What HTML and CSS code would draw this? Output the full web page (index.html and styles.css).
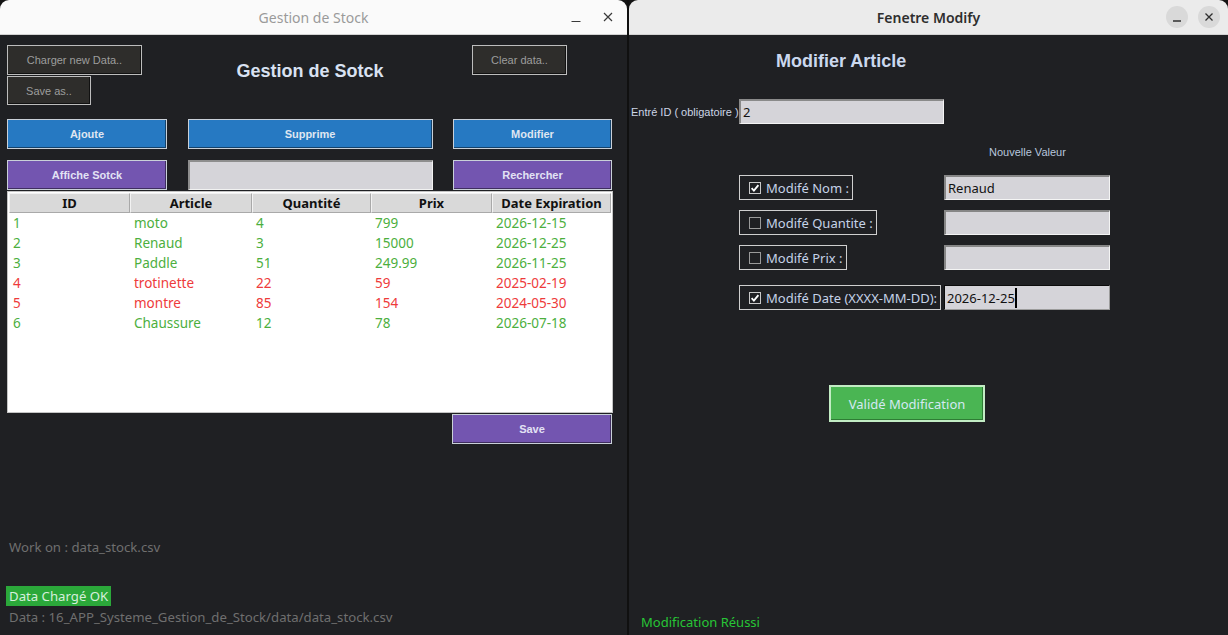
FILE: index.html
```html
<!DOCTYPE html>
<html lang="fr">
<head>
<meta charset="utf-8">
<title>Gestion de Stock</title>
<link rel="stylesheet" href="styles.css">
</head>
<body>
<div class="desktop">
  <section class="window win-main">
    <header class="titlebar inactive">
      <span class="title">Gestion de Stock</span>
      <div class="controls">
        <span class="ctl"><svg width="12" height="12" viewBox="0 0 12 12"><line x1="1.5" y1="10.5" x2="10.5" y2="10.5" stroke="#3a3a3a" stroke-width="1.2"/></svg></span>
        <span class="ctl"><svg width="12" height="12" viewBox="0 0 12 12"><path d="M2 2 L10 10 M10 2 L2 10" stroke="#3a3a3a" stroke-width="1.2"/></svg></span>
      </div>
    </header>
    <div class="body main-body">
      <div class="topbar">
        <div class="file-btns">
          <button class="tk-btn dark w-charger">Charger new Data..</button>
          <button class="tk-btn dark w-saveas">Save as..</button>
        </div>
        <h1 class="app-title">Gestion de Sotck</h1>
        <button class="tk-btn dark w-clear">Clear data..</button>
      </div>
      <div class="action-grid">
        <button class="tk-btn blue">Ajoute</button>
        <button class="tk-btn blue">Supprime</button>
        <button class="tk-btn blue">Modifier</button>
        <button class="tk-btn purple">Affiche Sotck</button>
        <div class="tk-entry search"></div>
        <button class="tk-btn purple">Rechercher</button>
      </div>
      <div class="table">
        <div class="thead">
          <div class="th">ID</div>
          <div class="th">Article</div>
          <div class="th">Quantité</div>
          <div class="th">Prix</div>
          <div class="th">Date Expiration</div>
        </div>
        <div class="tr ok"><div>1</div><div>moto</div><div>4</div><div>799</div><div>2026-12-15</div></div>
        <div class="tr ok"><div>2</div><div>Renaud</div><div>3</div><div>15000</div><div>2026-12-25</div></div>
        <div class="tr ok"><div>3</div><div>Paddle</div><div>51</div><div>249.99</div><div>2026-11-25</div></div>
        <div class="tr bad"><div>4</div><div>trotinette</div><div>22</div><div>59</div><div>2025-02-19</div></div>
        <div class="tr bad"><div>5</div><div>montre</div><div>85</div><div>154</div><div>2024-05-30</div></div>
        <div class="tr ok"><div>6</div><div>Chaussure</div><div>12</div><div>78</div><div>2026-07-18</div></div>
      </div>
      <div class="save-row">
        <button class="tk-btn purple save">Save</button>
      </div>
      <div class="footer">
        <p class="work-on">Work on : data_stock.csv</p>
        <p class="status-ok">Data Chargé OK</p>
        <p class="data-path">Data : 16_APP_Systeme_Gestion_de_Stock/data/data_stock.csv</p>
      </div>
    </div>
  </section>
  <div class="divider"></div>
  <section class="window win-modify">
    <header class="titlebar active">
      <span class="title">Fenetre Modify</span>
      <div class="controls">
        <span class="ctl round"><svg width="12" height="12" viewBox="0 0 12 12"><line x1="2" y1="10" x2="10" y2="10" stroke="#2e2e2e" stroke-width="1.3"/></svg></span>
        <span class="ctl round"><svg width="12" height="12" viewBox="0 0 12 12"><path d="M2.5 2.5 L9.5 9.5 M9.5 2.5 L2.5 9.5" stroke="#2e2e2e" stroke-width="1.3"/></svg></span>
      </div>
    </header>
    <div class="body modify-body">
      <h2 class="modify-title">Modifier Article</h2>
      <div class="id-row">
        <label class="id-label">Entré ID ( obligatoire )</label>
        <div class="tk-entry id-entry">2</div>
      </div>
      <p class="new-value">Nouvelle Valeur</p>
      <div class="check-grid">
        <div class="check-frame">
          <svg class="cb" width="12" height="12" viewBox="0 0 12 12"><rect x="0.5" y="0.5" width="11" height="11" fill="#1f2023" stroke="#c9c9c9"/><path d="M2.6 6.2 L4.9 8.6 L9.4 3.2" fill="none" stroke="#ffffff" stroke-width="1.8"/></svg>
          <span>Modifé Nom :</span>
        </div>
        <div class="tk-entry val-entry">Renaud</div>
        <div class="check-frame">
          <svg class="cb" width="12" height="12" viewBox="0 0 12 12"><rect x="0.5" y="0.5" width="11" height="11" fill="#1f2023" stroke="#9a9a9a"/></svg>
          <span>Modifé Quantite :</span>
        </div>
        <div class="tk-entry val-entry"></div>
        <div class="check-frame">
          <svg class="cb" width="12" height="12" viewBox="0 0 12 12"><rect x="0.5" y="0.5" width="11" height="11" fill="#1f2023" stroke="#9a9a9a"/></svg>
          <span>Modifé Prix :</span>
        </div>
        <div class="tk-entry val-entry"></div>
        <div class="check-frame date-frame">
          <svg class="cb" width="12" height="12" viewBox="0 0 12 12"><rect x="0.5" y="0.5" width="11" height="11" fill="#1f2023" stroke="#c9c9c9"/><path d="M2.6 6.2 L4.9 8.6 L9.4 3.2" fill="none" stroke="#ffffff" stroke-width="1.8"/></svg>
          <span>Modifé Date (XXXX-MM-DD):</span>
        </div>
        <div class="tk-entry val-entry focused date-entry">2026-12-25<span class="caret"></span></div>
      </div>
      <div class="validate-row">
        <button class="validate-btn">Validé Modification</button>
      </div>
      <p class="success">Modification Réussi</p>
    </div>
  </section>
</div>
</body>
</html>
```

FILE: styles.css
```css
* { box-sizing: border-box; }

html, body {
  margin: 0;
  padding: 0;
  background: #141414;
  width: 1228px;
  height: 635px;
  overflow: hidden;
}

.desktop {
  display: flex;
  width: 1228px;
  height: 635px;
}

.window {
  display: flex;
  flex-direction: column;
  height: 635px;
  overflow: hidden;
  border-radius: 9px 9px 0 0;
}

.win-main { width: 627px; }
.win-modify { width: 599px; }

.divider {
  width: 2px;
  height: 635px;
  background: #101010;
}

/* ---------- title bars ---------- */
.titlebar {
  height: 35px;
  flex: none;
  display: grid;
  grid-template-columns: 1fr auto 1fr;
  align-items: center;
  border-bottom: 1px solid #d2d2d2;
  font-family: "Noto Sans", "DejaVu Sans", sans-serif;
  font-size: 14px;
}
.titlebar .title { grid-column: 2; }
.titlebar .controls {
  grid-column: 3;
  justify-self: end;
  display: flex;
  gap: 10px;
  padding-right: 8px;
}
.titlebar.inactive { background: #fafafa; color: #9a9a9a; }
.titlebar.active { background: #ebebeb; color: #2e2e2e; font-weight: 600; }

.ctl {
  width: 22px;
  height: 22px;
  display: flex;
  align-items: center;
  justify-content: center;
  border-radius: 50%;
}
.ctl.round { background: #d9d9d9; }

/* ---------- window bodies ---------- */
.body {
  flex: 1;
  background: #1f2023;
  display: flex;
  flex-direction: column;
}

/* ---------- tk widgets ---------- */
.tk-btn {
  margin: 0;
  padding: 0;
  height: 30px;
  font-family: "Liberation Sans", Arial, sans-serif;
  font-size: 11px;
  border: 1px solid #c9d0d8;
  box-shadow: inset -1px -1px 0 rgba(0, 0, 0, 0.45);
  cursor: default;
}
.tk-btn.dark {
  background: #2e2d2b;
  color: #9d9d9d;
  border-color: #bdbdbd;
  box-shadow: inset -1px -1px 0 #111;
}
.tk-btn.blue {
  background: #2679c2;
  color: #dfe6f1;
  font-weight: bold;
}
.tk-btn.purple {
  background: #7355b0;
  color: #e2e2f4;
  font-weight: bold;
}

.tk-entry {
  background: #d5d4d9;
  border-top: 1px solid #8a8a8a;
  border-left: 1px solid #8a8a8a;
  border-right: 1px solid #f4f4f4;
  border-bottom: 1px solid #f4f4f4;
  color: #111;
  font-family: "Noto Sans", "DejaVu Sans", sans-serif;
  font-size: 13px;
}

/* ---------- main window ---------- */
.topbar {
  display: grid;
  grid-template-columns: 135px 1fr 95px;
  margin: 10px 60px 0 7px;
  align-items: start;
}
.file-btns {
  display: flex;
  flex-direction: column;
  align-items: flex-start;
  gap: 1px;
}
.w-charger { width: 135px; }
.w-saveas { width: 84px; height: 29px; }
.w-clear { width: 95px; }

.app-title {
  margin: 16px 0 0 0;
  padding-left: 6px;
  text-align: center;
  font-family: "Liberation Sans", Arial, sans-serif;
  font-size: 18px;
  line-height: 21px;
  font-weight: bold;
  color: #d9e2f2;
}

.action-grid {
  display: grid;
  grid-template-columns: 160px 245px 159px;
  justify-content: space-between;
  grid-auto-rows: 30px;
  row-gap: 11px;
  width: 605px;
  margin: 14px 0 0 7px;
}
.action-grid .tk-btn { width: 100%; height: 30px; }
.search {
  border-color: #8e8e8e #f2f2f2 #f2f2f2 #8e8e8e;
  border-width: 2px 1px 1px 2px;
  border-style: solid;
}

.table {
  margin: 1px 0 0 7px;
  width: 606px;
  height: 222px;
  background: #ffffff;
  border: 1px solid #c4c4c4;
  padding: 1px 1px 0 1px;
  font-family: "Noto Sans", "DejaVu Sans", sans-serif;
  font-size: 13.5px;
}
.thead, .tr {
  display: grid;
  grid-template-columns: 121px 122px 119px 121px 119px;
}
.th {
  height: 20px;
  line-height: 18px;
  background: #d9d9d9;
  border-top: 1px solid #f2f2f2;
  border-left: 1px solid #f2f2f2;
  border-right: 1px solid #a9a9a9;
  border-bottom: 1px solid #a9a9a9;
  text-align: center;
  font-weight: bold;
  font-size: 13px;
  color: #111;
}
.tr { height: 20px; line-height: 20px; }
.tr > div { padding-left: 4px; white-space: nowrap; }
.tr.ok { color: #4caf3e; }
.tr.bad { color: #ee3b3b; }

.save-row {
  display: flex;
  justify-content: flex-end;
  margin: 1px 15px 0 0;
}
.save { width: 160px; }

.footer {
  margin-top: 94px;
  font-family: "Noto Sans", "DejaVu Sans", sans-serif;
  font-size: 13.2px;
}
.footer p { margin: 0; }
.work-on {
  padding-left: 9px;
  line-height: 18px;
  color: #6f6f6f;
}
.status-ok {
  display: inline-block;
  margin: 30px 0 0 6px !important;
  padding: 0 3px;
  line-height: 20px;
  background: #2ba83a;
  color: #d6efdc;
}
.data-path {
  margin-top: 2px !important;
  padding-left: 9px;
  line-height: 18px;
  color: #6f6f6f;
}

/* ---------- modify window ---------- */
.modify-title {
  margin: 16px 0 0 147px;
  font-family: "Liberation Sans", Arial, sans-serif;
  font-size: 18px;
  line-height: 21px;
  font-weight: bold;
  color: #cbd8ee;
}

.id-row {
  display: flex;
  align-items: center;
  margin: 27px 0 0 2px;
}
.id-label {
  width: 108px;
  font-family: "Liberation Sans", Arial, sans-serif;
  font-size: 11px;
  color: #cdd6e6;
}
.id-entry {
  width: 205px;
  height: 25px;
  line-height: 23px;
  padding-left: 2px;
  border-width: 2px 1px 1px 2px;
  border-style: solid;
  border-color: #8a8a8a #f4f4f4 #f4f4f4 #8a8a8a;
}

.new-value {
  margin: 21px 0 0 360px;
  font-family: "Liberation Sans", Arial, sans-serif;
  font-size: 11px;
  line-height: 14px;
  color: #b7c6de;
}

.check-grid {
  display: grid;
  grid-template-columns: 205px 166px;
  grid-auto-rows: 25px;
  row-gap: 10px;
  margin: 16px 0 0 110px;
}
.check-frame {
  justify-self: start;
  display: inline-flex;
  align-items: center;
  gap: 5px;
  height: 25px;
  padding: 0 3px 0 9px;
  border: 1px solid #cfcfcf;
  font-family: "Noto Sans", "DejaVu Sans", sans-serif;
  font-size: 13px;
  color: #c6d3e8;
  white-space: nowrap;
}
.cb { flex: none; }
.date-frame, .date-entry { margin-top: 5px; }
.val-entry {
  width: 166px;
  height: 25px;
  line-height: 22px;
  padding-left: 2px;
  border-width: 2px 1px 1px 2px;
  border-style: solid;
  border-color: #868686 #f4f4f4 #f4f4f4 #868686;
}
.val-entry.focused {
  border-color: #0c0c0c #9c9c9c #9c9c9c #0c0c0c;
  border-width: 1px;
  display: flex;
  align-items: center;
}
.caret {
  display: inline-block;
  width: 2px;
  height: 20px;
  margin-left: 0;
  background: #000;
}

.validate-row {
  margin: 80px 0 0 200px;
}
.validate-btn {
  margin: 0;
  width: 156px;
  height: 37px;
  background: #4ab553;
  border: 2px solid #c2ecc4;
  box-shadow: inset -1px -1px 0 #2e7d34;
  color: #d4e9f2;
  font-family: "Noto Sans", "DejaVu Sans", sans-serif;
  font-size: 13px;
}

.success {
  margin: auto 0 4px 12px;
  font-family: "Noto Sans", "DejaVu Sans", sans-serif;
  font-size: 13px;
  line-height: 18px;
  color: #27c636;
}
```
